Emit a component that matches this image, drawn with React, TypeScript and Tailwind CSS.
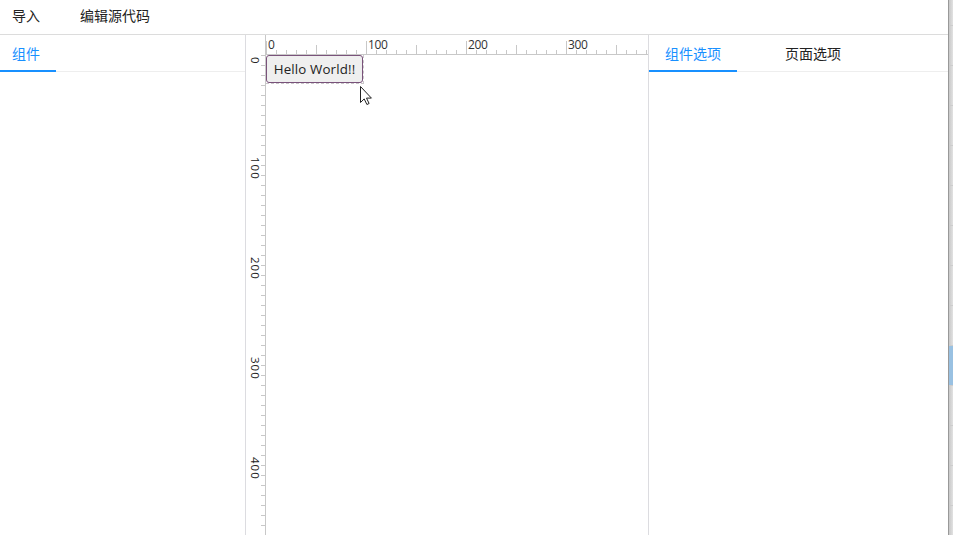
const latin = "font-['Open_Sans','Noto_Sans',sans-serif]";
const range = (n: number) => Array.from({ length: n }, (_, i) => i);

function Tab({ label, active = false, className }: { label: string; active?: boolean; className: string }) {
  return (
    <div className={`relative h-[37px] shrink-0 pt-2 leading-5 ${className} ${active ? 'text-[#1890ff]' : ''}`}>
      {label}
      {active && <span className="absolute inset-x-0 bottom-0 h-0.5 bg-[#1890ff]" />}
    </div>
  );
}

function TopRuler() {
  return (
    <div className={`flex h-5 overflow-hidden border-b border-[#c8c8c8] ${latin}`}>
      {range(39).map((i) => (
        <div key={i} className="relative flex w-2.5 shrink-0 items-end">
          <i className={`w-px bg-[#c8c8c8] ${i % 10 === 0 ? 'h-[13px]' : i % 5 === 0 ? 'h-[9px]' : 'h-1'}`} />
          {i % 10 === 0 && <span className="absolute left-0.5 top-[3px] text-[12px] leading-[14px] tracking-[-0.4px] text-[#333]">{i * 10}</span>}
        </div>
      ))}
    </div>
  );
}

function SideRuler() {
  return (
    <div className={`w-5 shrink-0 overflow-hidden border-r border-[#c8c8c8] pt-5 ${latin}`}>
      {range(48).map((i) => (
        <div key={i} className="relative flex h-2.5 justify-end">
          <i className="h-px w-1 bg-[#c8c8c8]" />
          {i % 10 === 0 && (
            <span className="absolute left-[2px] top-[2px] text-[11.5px] leading-[14px] tracking-[1px] text-[#222] [writing-mode:vertical-rl]">
              {i * 10}
            </span>
          )}
        </div>
      ))}
    </div>
  );
}

export default function App() {
  return (
    <div className="flex h-[535px] w-[953px] overflow-hidden bg-white font-['Noto_Sans_CJK_SC',sans-serif] text-[14px] text-[#222]">
      <div className="flex w-[948px] flex-col">
        <header className="flex h-[35px] shrink-0 gap-10 border-b border-[#dcdcdc] pl-3 pt-[5px] leading-5">
          <span>导入</span>
          <span>编辑源代码</span>
        </header>
        <main className="flex min-h-0 flex-1">
          <aside className="w-[246px] shrink-0 border-r border-[#dcdce0]">
            <div className="flex h-[37px] border-b border-[#eeeeee]">
              <Tab label="组件" active className="w-14 pl-3" />
            </div>
          </aside>
          <SideRuler />
          <section className="w-[383px] shrink-0 border-r border-[#dcdce0]">
            <TopRuler />
            <div className="h-[29px] w-[98px] border-b border-r border-dashed border-[#c9c5c9]">
              <button className={`block h-7 w-[97px] rounded-[3px] border border-[#79527a] bg-[#efefef] text-[13.3px] leading-[26px] tracking-[0.15px] ${latin}`}>Hello World!!</button>
            </div>
            <svg className="ml-[93px] h-[24px] w-[16px]" viewBox="0 0 16 24">
              <path d="M1.5 2.5v16l3.7-3.6 2.7 5.6 2.2-1-2.6-5.4h4.9z" fill="white" stroke="#222" />
            </svg>
          </section>
          <aside className="min-w-0 flex-1">
            <div className="flex h-[37px] border-b border-[#eeeeee]">
              <Tab label="组件选项" active className="w-[88px] pl-4" />
              <Tab label="页面选项" className="ml-8 w-[88px] pl-4" />
            </div>
          </aside>
        </main>
      </div>
      <div className="w-[5px] border-l border-[#999] bg-linear-to-r from-[#c8c8c8] to-[#e2e2e2]">
        <div className="h-[26px] border-b border-[#cccccc]" />
        {range(13).map((i) => (
          <div key={i} className={`h-10 border-b border-[#cccccc] ${i === 8 ? 'bg-[#99c1e2]' : ''}`} />
        ))}
      </div>
    </div>
  );
}
